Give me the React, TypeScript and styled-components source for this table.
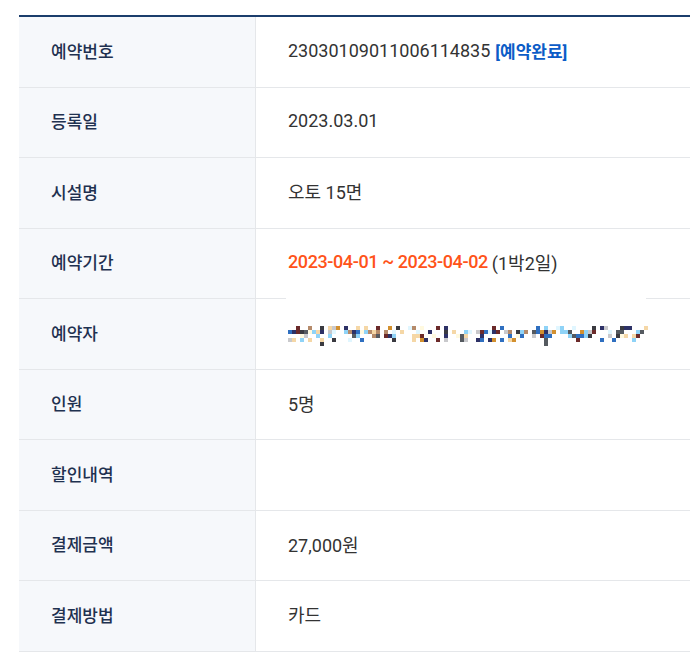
import React from 'react';
import styled, { createGlobalStyle } from 'styled-components';

const GlobalStyle = createGlobalStyle`
  html, body {
    margin: 0;
    padding: 0;
    background: #fff;
  }
  body {
    font-family: Roboto, "Noto Sans CJK KR", "Noto Sans", sans-serif;
    -webkit-font-smoothing: antialiased;
  }
`;

const Wrapper = styled.div`
  padding: 15px 0 0 19px;
  overflow: hidden;
`;

const Table = styled.div`
  border-top: 2px solid #1b3d6c;
  display: grid;
  grid-template-columns: 237px 1fr;
  width: 700px;
`;

const Row = styled.div`
  display: contents;
`;

const Head = styled.div`
  height: 70.5px;
  box-sizing: border-box;
  background: #f6f8fb;
  border-bottom: 1px solid #e5e7ea;
  border-right: 1px solid #e5e7ea;
  display: flex;
  align-items: center;
  padding: 0 0 3px 32px;
  font-size: 17px;
  font-weight: 500;
  color: #1f3150;
`;

const Cell = styled.div`
  position: relative;
  height: 70.5px;
  box-sizing: border-box;
  border-bottom: 1px solid #e5e7ea;
  display: flex;
  align-items: center;
  padding: 0 0 3px 32px;
  font-size: 18px;
  color: #333;
  white-space: nowrap;
`;

const Status = styled.span`
  margin-left: 5px;
  color: #0b5cc7;
  font-weight: 700;
  font-size: 17px;
`;

const Period = styled.span`
  color: #ff5319;
  font-weight: 500;
  letter-spacing: -0.4px;
`;

const Nights = styled.span`
  margin-left: 4px;
`;

const Cover = styled.div`
  position: absolute;
  left: 30px;
  top: -1px;
  width: 360px;
  height: 2px;
  background: #fff;
`;

const MosaicBox = styled.svg`
  display: block;
  margin-top: 8px;
`;

const palette = [
  '#2d3166', '#555a60', '#6b2a2a', '#2f6fc0', '#8fd3f7', '#f5d7a6',
  '#d3902f', '#fff9df', '#c9c9cc', '#3a3a40', '#b58a6a', '#e0f6ff',
];

const Mosaic = () => {
  let seed = 7;
  const rnd = () => {
    seed = (seed * 9301 + 49297) % 233280;
    return seed / 233280;
  };
  const cells: JSX.Element[] = [];
  const cols = 90;
  const rows = 5;
  const density = [0.3, 0.55, 0.45, 0.25, 0.05];
  for (let r = 0; r < rows; r++) {
    for (let c = 0; c < cols; c++) {
      if (rnd() < density[r]) {
        const color = palette[Math.floor(rnd() * palette.length)];
        cells.push(<rect key={`${r}-${c}`} x={c * 4} y={r * 4} width={4} height={4} fill={color} />);
      }
    }
  }
  return (
    <MosaicBox width={360} height={20} viewBox="0 0 360 20">
      {cells}
    </MosaicBox>
  );
};

export default function App() {
  return (
    <>
      <GlobalStyle />
      <Wrapper>
        <Table>
          <Row>
            <Head>예약번호</Head>
            <Cell>
              23030109011006114835<Status>[예약완료]</Status>
            </Cell>
          </Row>
          <Row>
            <Head>등록일</Head>
            <Cell>2023.03.01</Cell>
          </Row>
          <Row>
            <Head>시설명</Head>
            <Cell>오토 15면</Cell>
          </Row>
          <Row>
            <Head>예약기간</Head>
            <Cell>
              <Period>2023-04-01 ~ 2023-04-02</Period>
              <Nights>(1박2일)</Nights>
            </Cell>
          </Row>
          <Row>
            <Head>예약자</Head>
            <Cell>
              <Cover />
              <Mosaic />
            </Cell>
          </Row>
          <Row>
            <Head>인원</Head>
            <Cell>5명</Cell>
          </Row>
          <Row>
            <Head>할인내역</Head>
            <Cell />
          </Row>
          <Row>
            <Head>결제금액</Head>
            <Cell>27,000원</Cell>
          </Row>
          <Row>
            <Head>결제방법</Head>
            <Cell>카드</Cell>
          </Row>
        </Table>
      </Wrapper>
    </>
  );
}
